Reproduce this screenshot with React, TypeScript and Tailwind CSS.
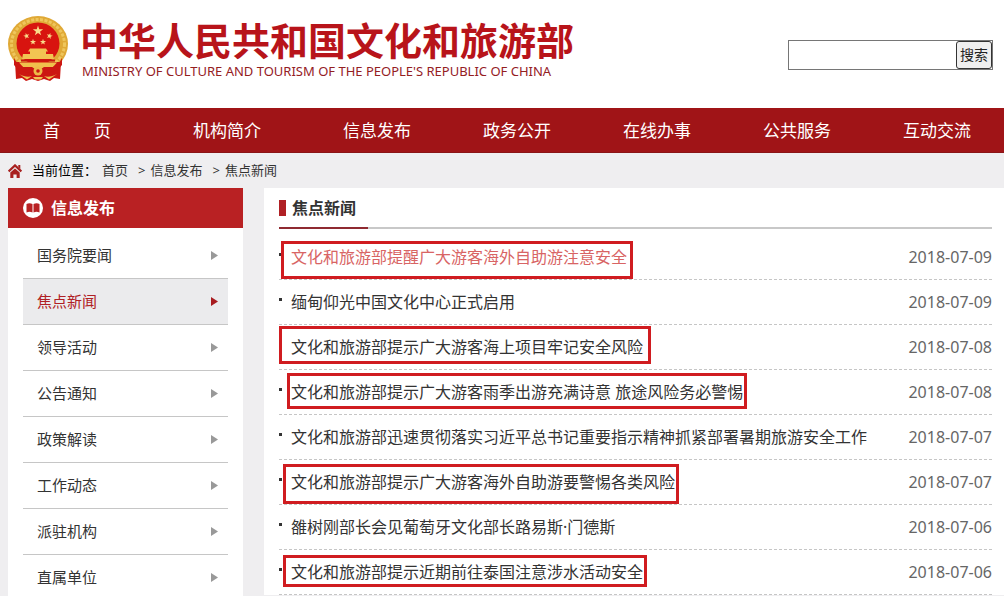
import React from "react";

const navItems = ["机构简介", "信息发布", "政务公开", "在线办事", "公共服务", "互动交流"];

const sideItems = [
  "国务院要闻",
  "焦点新闻",
  "领导活动",
  "公告通知",
  "政策解读",
  "工作动态",
  "派驻机构",
  "直属单位",
];

type News = { title: string; date: string; mark?: string; visited?: boolean };

const news: News[] = [
  {
    title: "文化和旅游部提醒广大游客海外自助游注意安全",
    date: "2018-07-09",
    mark: "-left-2.5 -right-1.5 top-1.5 h-[38px]",
    visited: true,
  },
  { title: "缅甸仰光中国文化中心正式启用", date: "2018-07-09" },
  {
    title: "文化和旅游部提示广大游客海上项目牢记安全风险",
    date: "2018-07-08",
    mark: "-left-3 -right-2 top-px h-[38px]",
  },
  {
    title: "文化和旅游部提示广大游客雨季出游充满诗意 旅途风险务必警惕",
    date: "2018-07-08",
    mark: "-left-1 -right-1 top-[3px] h-9",
  },
  {
    title: "文化和旅游部迅速贯彻落实习近平总书记重要指示精神抓紧部署暑期旅游安全工作",
    date: "2018-07-07",
  },
  {
    title: "文化和旅游部提示广大游客海外自助游要警惕各类风险",
    date: "2018-07-07",
    mark: "-left-2 -right-1 top-1 h-10",
  },
  { title: "雒树刚部长会见葡萄牙文化部长路易斯·门德斯", date: "2018-07-06" },
  {
    title: "文化和旅游部提示近期前往泰国注意涉水活动安全",
    date: "2018-07-06",
    mark: "-left-2 -right-1 top-[5px] h-8",
  },
];

const STAR = "M0-10 2.3-3.1H9.5L3.7 1.2 5.9 8.1 0 3.9-5.9 8.1-3.7 1.2-9.5-3.1H-2.3Z";

function Emblem() {
  return (
    <svg viewBox="0 0 60 66" className="h-[66px] w-[60px] shrink-0" aria-hidden="true">
      <ellipse cx="30" cy="28" rx="30" ry="28" fill="#e0a936" />
      <ellipse cx="30" cy="28" rx="26.500" ry="24.500" fill="none" stroke="#efc65c" strokeWidth="3" strokeDasharray="3 1.500" />
      <path d="M7 46 8 63l6-1 4 3 6-2 6 2 6-2 6 2 4-3 6 1 1-17Z" fill="#cc1712" />
      <ellipse cx="30" cy="27.500" rx="21.500" ry="21" fill="#d8140f" />
      <g fill="#f9dc8a">
        <path d={STAR} transform="translate(30 15) scale(.54)" />
        <path d={STAR} transform="translate(18.500 20) scale(.32) rotate(-15)" />
        <path d={STAR} transform="translate(41.500 20) scale(.32) rotate(15)" />
        <path d={STAR} transform="translate(25 26) scale(.32)" />
        <path d={STAR} transform="translate(35 26) scale(.32)" />
      </g>
      <path d="M22 32.500h16l2 3h-2v2.500h7l1 5H14l1-5h7v-2.500h-2Z" fill="#f2c452" />
      <path d="M11 46.500h38l-4 4.500h-9l-6 4-6-4h-9Z" fill="#f0c04c" />
      <path d="M13 43.500h34v2H13Z" fill="#c9160f" />
      <path d="M6 42c4 8 9 10 17 10l3 4c-8 2-16-2-20-7Z M54 42c-4 8-9 10-17 10l-3 4c8 2 16-2 20-7Z" fill="#cc1712" />
      <circle cx="30" cy="55" r="4.500" fill="#edbb48" />
      <circle cx="30" cy="55" r="1.800" fill="#c9160f" />
      <path d="M11 58c5 2.500 9 3.500 13 2l-5 3.500Z M49 58c-5 2.500-9 3.500-13 2l5 3.500Z M25 61h10l-2 2.500h-6Z" fill="#efc453" />
    </svg>
  );
}

function HomeIcon() {
  return (
    <svg viewBox="0 0 14 14" className="h-3.5 w-3.5 shrink-0" aria-hidden="true">
      <path d="M.6 7.400 7 1.400 13.400 7.400" fill="none" stroke="#a8201f" strokeWidth="2.200" />
      <path d="M10.300 1h2v4l-2-2Z" fill="#a8201f" />
      <path d="M2.300 8.600 7 4.400l4.700 4.200V14H8.600v-3.600H5.400V14H2.300Z" fill="#a8201f" />
    </svg>
  );
}

function BookIcon() {
  return (
    <svg viewBox="0 0 20 20" className="h-5 w-5 shrink-0" aria-hidden="true">
      <circle cx="10" cy="10" r="10" fill="#fff" />
      <path d="M3.500 6c2-.9 4-.8 6 0v8.500c-2-.9-4-.9-6 0Z" fill="#b92123" />
      <path d="M16.500 6c-2-.9-4-.8-6 0v8.500c2-.9 4-.9 6 0Z" fill="#b92123" />
    </svg>
  );
}

export default function App() {
  return (
    <div className="h-screen overflow-hidden bg-[#efeef0] font-['Noto_Sans','Noto_Sans_CJK_SC',sans-serif] text-[#333]">
      <header className="flex h-[108px] items-start justify-between bg-white pr-[11px] pl-2">
        <div className="flex gap-3 pt-4">
          <Emblem />
          <div className="pt-0.5 whitespace-nowrap">
            <h1 className="font-['Noto_Sans_CJK_SC',sans-serif] text-[38px] leading-[42px] font-bold text-[#b8141a]">
              中华人民共和国文化和旅游部
            </h1>
            <p className="pt-0.5 pl-0.5 text-[13px] leading-[18px] text-[#94201f]">
              MINISTRY OF CULTURE AND TOURISM OF THE PEOPLE'S REPUBLIC OF CHINA
            </p>
          </div>
        </div>
        <form className="mt-10 flex h-[30px] w-[205px] border border-[#767676] bg-white" onSubmit={(e) => e.preventDefault()}>
          <input type="text" aria-label="搜索" className="min-w-0 flex-1 px-1 text-sm outline-none" />
          <button type="submit" className="w-9 shrink-0 rounded-[3px] border border-[#333] bg-[#efefef] text-sm text-[#222]">
            搜索
          </button>
        </form>
      </header>

      <nav className="h-[45px] border-b border-[#8a1517] bg-[#a01417] pl-[43px] text-[17px] leading-[45px] text-white">
        <ul className="grid grid-cols-[150fr_150fr_140fr_140fr_140fr_140fr_101fr] whitespace-nowrap">
          <li>
            <a href="#" className="flex w-[68px] justify-between">
              <span>首</span>
              <span>页</span>
            </a>
          </li>
          {navItems.map((n) => (
            <li key={n}>
              <a href="#">{n}</a>
            </li>
          ))}
        </ul>
      </nav>

      <div className="flex h-[35px] items-center px-2 text-[13px] text-[#333]">
        <HomeIcon />
        <span className="ml-2.5 text-black">当前位置：</span>
        <a href="#" className="ml-[5px]">首页</a>
        <span className="mr-[5px] ml-2.5">&gt;</span>
        <a href="#">信息发布</a>
        <span className="mr-[5px] ml-2.5">&gt;</span>
        <a href="#">焦点新闻</a>
      </div>

      <div className="flex items-start">
        <aside className="ml-2 w-[235px] shrink-0 bg-white">
          <h2 className="flex h-10 items-center gap-2 bg-[#b92123] pl-[15px] text-base font-bold text-white">
            <BookIcon />
            信息发布
          </h2>
          <ul className="px-[15px] pt-[5px]">
            {sideItems.map((s, i) => (
              <li key={s}>
                <a
                  href="#"
                  className={
                    "flex h-[46px] items-center justify-between border-b border-[#c6c6c6] pr-2.5 pl-3.5 text-[15px] " +
                    (i === 1 ? "bg-[#ebebed] text-[#b02024]" : "")
                  }
                >
                  {s}
                  <svg
                    viewBox="0 0 7 9"
                    className={"h-[9px] w-[7px] " + (i === 1 ? "fill-[#a81c20]" : "fill-[#999]")}
                    aria-hidden="true"
                  >
                    <path d="M0 0 7 4.500 0 9Z" />
                  </svg>
                </a>
              </li>
            ))}
          </ul>
        </aside>

        <main className="ml-[21px] min-w-0 flex-1 bg-white pr-3 pl-[15px]">
          <div className="flex h-[41px] border-b-2 border-[#c8c8c8]">
            <h2 className="-mb-0.5 flex w-[89px] items-center gap-1.5 border-b-2 border-[#8f2a31] text-base font-bold whitespace-nowrap">
              <span className="h-4 w-[7px] bg-[#b02024]" />
              焦点新闻
            </h2>
          </div>
          <ul className="pt-1.5">
            {news.map((n) => (
              <li
                key={n.title}
                className="flex h-[45px] items-center border-b border-dashed border-[#c6c6c6] text-base whitespace-nowrap"
              >
                <span className="mr-[9px] mb-1.5 h-[3px] w-[3px] bg-[#333]" />
                <div className="relative flex h-full items-center">
                  <a href="#" className={n.visited ? "text-[#d86464]" : ""}>
                    {n.title}
                  </a>
                  {n.mark && (
                    <span className={"pointer-events-none absolute border-[3px] border-[#d01c20] " + n.mark} />
                  )}
                </div>
                <time className="ml-auto text-[#666]">{n.date}</time>
              </li>
            ))}
          </ul>
        </main>
      </div>
    </div>
  );
}
